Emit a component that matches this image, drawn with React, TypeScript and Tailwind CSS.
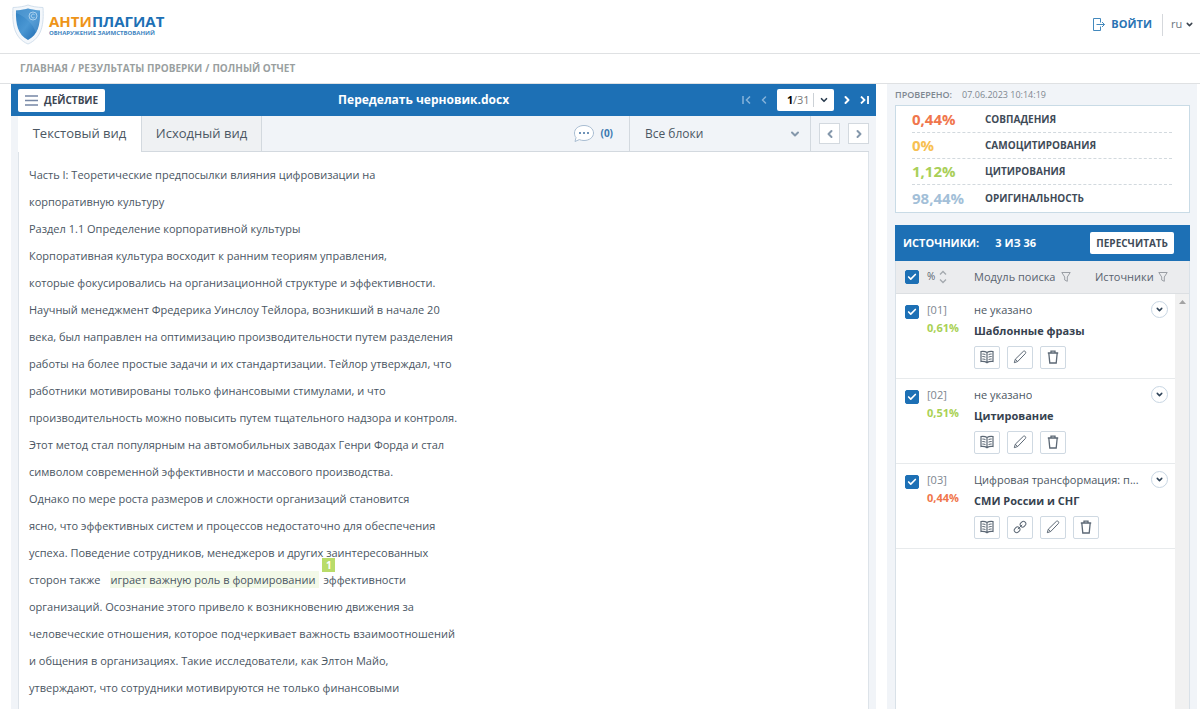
import type { ReactNode } from 'react'
import clsx from 'clsx'
import {
  Check,
  ChevronDown,
  ChevronLeft,
  ChevronRight,
} from 'lucide-react'

const documentLines = [
  'Часть I: Теоретические предпосылки влияния цифровизации на',
  'корпоративную культуру',
  'Раздел 1.1 Определение корпоративной культуры',
  'Корпоративная культура восходит к ранним теориям управления,',
  'которые фокусировались на организационной структуре и эффективности.',
  'Научный менеджмент Фредерика Уинслоу Тейлора, возникший в начале 20',
  'века, был направлен на оптимизацию производительности путем разделения',
  'работы на более простые задачи и их стандартизации. Тейлор утверждал, что',
  'работники мотивированы только финансовыми стимулами, и что',
  'производительность можно повысить путем тщательного надзора и контроля.',
  'Этот метод стал популярным на автомобильных заводах Генри Форда и стал',
  'символом современной эффективности и массового производства.',
  'Однако по мере роста размеров и сложности организаций становится',
  'ясно, что эффективных систем и процессов недостаточно для обеспечения',
  'успеха. Поведение сотрудников, менеджеров и других заинтересованных',
]

const documentLinesAfter = [
  'организаций. Осознание этого привело к возникновению движения за',
  'человеческие отношения, которое подчеркивает важность взаимоотношений',
  'и общения в организациях. Такие исследователи, как Элтон Майо,',
  'утверждают, что сотрудники мотивируются не только финансовыми',
]

const stats = [
  { value: '0,44%', label: 'СОВПАДЕНИЯ', color: 'text-[#f0764c]' },
  { value: '0%', label: 'САМОЦИТИРОВАНИЯ', color: 'text-[#f7c052]' },
  { value: '1,12%', label: 'ЦИТИРОВАНИЯ', color: 'text-[#a9cf58]' },
  { value: '98,44%', label: 'ОРИГИНАЛЬНОСТЬ', color: 'text-[#a3bfd8]' },
]

const sources = [
  {
    id: '01',
    percent: '0,61%',
    color: 'text-[#a9d155]',
    name: 'не указано',
    module: 'Шаблонные фразы',
    hasLink: false,
  },
  {
    id: '02',
    percent: '0,51%',
    color: 'text-[#a9d155]',
    name: 'не указано',
    module: 'Цитирование',
    hasLink: false,
  },
  {
    id: '03',
    percent: '0,44%',
    color: 'text-[#f0764c]',
    name: 'Цифровая трансформация: п...',
    module: 'СМИ России и СНГ',
    hasLink: true,
  },
]

function ShieldLogo() {
  return (
    <svg viewBox="0 0 34 41" className="w-[34px] h-[41px]" aria-hidden="true">
      <defs>
        <linearGradient id="shield" x1="0" y1="0" x2="1" y2="1">
          <stop offset="0" stopColor="#2f7fc0" />
          <stop offset="0.5" stopColor="#4a97d3" />
          <stop offset="1" stopColor="#1b66ad" />
        </linearGradient>
      </defs>
      <path
        d="M17 1c4 1.500 9 2.300 15 2.500C33 20 31 34 17 40 3 34 1 20 2 3.500 8 3.300 13 2.500 17 1z"
        fill="#f3f7fb"
        stroke="#d3e0ed"
      />
      <path
        d="M17 4.500c4 1.200 8 1.800 12 2C29.500 20 27 31 17 36 7 31 4.500 20 5 6.500c4-.2 8-.8 12-2z"
        fill="url(#shield)"
      />
      <path d="M5 9c8 3 17 10 20 20 3-6 4-13 4-22.500-4-.2-8-.8-12-2-4 1.200-8 1.800-12 2z" fill="#6fb0e0" opacity=".35" />
      <circle cx="22" cy="12" r="4" fill="none" stroke="#a9d0ee" strokeWidth="1" />
      <path d="M23.500 10.500a2 2 0 1 0 0 3" fill="none" stroke="#a9d0ee" strokeWidth="1" />
    </svg>
  )
}

function LoginIcon() {
  return (
    <svg viewBox="0 0 13 14" className="w-[13px] h-[14px]" fill="none" stroke="#4389bd" aria-hidden="true">
      <path d="M8.500 4.500v-4h-7v12h7v-4M4.500 6.500h8M10 4l2.500 2.500L10 9" />
    </svg>
  )
}

function FirstIcon() {
  return (
    <svg viewBox="0 0 9 8" className="w-[9px] h-2" fill="none" stroke="currentColor" aria-hidden="true">
      <path d="M1 0v8M8 .5L4.500 4 8 7.500" strokeWidth="1.500" />
    </svg>
  )
}

function LastIcon() {
  return (
    <svg viewBox="0 0 9 8" className="w-[9px] h-2" fill="none" stroke="currentColor" aria-hidden="true">
      <path d="M8 0v8M1 .5L4.500 4 1 7.500" strokeWidth="1.800" />
    </svg>
  )
}

function CommentIcon() {
  return (
    <svg viewBox="0 0 22 19" className="w-[22px] h-[19px]" aria-hidden="true">
      <path
        d="M11 1.500c5.500 0 9.500 3.300 9.500 7.500s-4 7.500-9.500 7.500c-1.800 0-3.300-.3-4.700-.9L2 17.500l1-4C1.800 12.300 1.500 10.700 1.500 9c0-4.200 4-7.500 9.500-7.500z"
        fill="#fff"
        stroke="#a9bdd2"
      />
      <path d="M6 9h2M10 9h2M14 9h2" stroke="#6f93b8" strokeWidth="2" />
    </svg>
  )
}

function SortIcon() {
  return (
    <svg viewBox="0 0 8 14" className="w-2 h-[14px]" fill="none" stroke="#a3a8ae" strokeWidth="1.300" aria-hidden="true">
      <path d="M1 4.500l3-3 3 3M1 9.500l3 3 3-3" />
    </svg>
  )
}

function FunnelIcon() {
  return (
    <svg viewBox="0 0 10 10" className="w-[10px] h-[10px] shrink-0" fill="none" stroke="#9a9ea4" aria-hidden="true">
      <path d="M.8.500h8.400L6.300 5v4.300l-2.600-1.300V5z" />
    </svg>
  )
}

function BookIcon() {
  return (
    <svg viewBox="0 0 14 14" className="w-[14px] h-[14px]" fill="none" stroke="#5c6875" aria-hidden="true">
      <path d="M7 2.500C5.500 1.500 3.500 1.200 1 1.500v10c2.500-.3 4.500.1 6 1.200 1.500-1.100 3.500-1.500 6-1.200v-10C10.500 1.200 8.500 1.500 7 2.500zM7 2.500v10" strokeWidth="1.200" />
      <path d="M2.300 4c1.100 0 2.200.1 3.200.6M2.300 6.500c1.100 0 2.200.1 3.200.6M2.300 9c1.100 0 2.200.1 3.200.6M11.700 4c-1.100 0-2.200.1-3.200.6M11.700 6.500c-1.100 0-2.200.1-3.200.6M11.700 9c-1.100 0-2.200.1-3.200.6" />
    </svg>
  )
}

function PencilIcon() {
  return (
    <svg viewBox="0 0 14 14" className="w-[14px] h-[14px]" fill="none" stroke="#5c6875" strokeLinejoin="round" aria-hidden="true">
      <path d="M1.300 12.700l1-3.500 7.900-7.700c.6-.6 1.500-.6 2.100 0s.6 1.500 0 2.100l-7.600 7.900zM2.300 9.200l2.300 2.300" />
    </svg>
  )
}

function TrashIcon() {
  return (
    <svg viewBox="0 0 12 14" className="w-3 h-[14px]" fill="none" stroke="#5c6875" aria-hidden="true">
      <path d="M.8 3h10.400M4 3V1.200h4V3M1.800 3l1 10h6.400l1-10" strokeWidth="1.300" />
    </svg>
  )
}

function ChainIcon() {
  return (
    <svg viewBox="0 0 14 14" className="w-[14px] h-[14px]" fill="none" stroke="#5c6875" aria-hidden="true">
      <rect x="7" y="1.800" width="6" height="4.800" rx="2.400" transform="rotate(-45 10 4.200)" />
      <rect x="1.100" y="7.400" width="6" height="4.800" rx="2.400" transform="rotate(-45 4.100 9.800)" />
      <path d="M4.800 9.200l4.400-4.400" />
    </svg>
  )
}

function Checkbox({ label }: { label: string }) {
  return (
    <label className="grid size-[14px] place-items-center">
      <input
        type="checkbox"
        defaultChecked
        aria-label={label}
        className="peer col-start-1 row-start-1 size-[14px] appearance-none rounded-xs border border-[#1d70b5] bg-white checked:bg-[#1d70b5]"
      />
      <Check
        className="pointer-events-none col-start-1 row-start-1 hidden size-[10px] text-white peer-checked:block"
        strokeWidth={4}
      />
    </label>
  )
}

function IconButton({ label, children }: { label: string; children: ReactNode }) {
  return (
    <button
      type="button"
      aria-label={label}
      className="flex h-[23px] w-[26px] items-center justify-center rounded-xs border border-[#cfd9e2] bg-white"
    >
      {children}
    </button>
  )
}

function Header() {
  return (
    <header className="flex h-[54px] items-center justify-between border-b border-[#dfe1e3] pl-[11px] pr-[6px]">
      <a href="#" className="flex items-center gap-1 pb-1">
        <ShieldLogo />
        <span className="flex flex-col">
          <span className="text-[15px] leading-4 font-bold text-[#1d70b5]">
            <span className="text-[#ee9418]">АНТИ</span>ПЛАГИАТ
          </span>
          <span className="text-[6px] leading-2 font-bold text-[#3d84bf]">
            ОБНАРУЖЕНИЕ ЗАИМСТВОВАНИЙ
          </span>
        </span>
      </a>
      <div className="flex items-center pb-1">
        <a href="#" className="flex items-center gap-[6px] text-[11px] font-bold text-[#2a74b4]">
          <LoginIcon />
          ВОЙТИ
        </a>
        <div className="ml-[10px] h-[22px] border-l border-[#d5d8dc]" />
        <label className="ml-2 grid w-[23px] items-center">
          <select
            aria-label="Язык"
            defaultValue="ru"
            className="col-start-1 row-start-1 appearance-none bg-transparent text-[11px] text-[#6b747e]"
          >
            <option>ru</option>
            <option>en</option>
          </select>
          <ChevronDown className="pointer-events-none col-start-1 row-start-1 size-[9px] justify-self-end text-[#3b444e]" strokeWidth={4} />
        </label>
      </div>
    </header>
  )
}

function Toolbar() {
  return (
    <div className="flex h-8 items-center justify-between bg-[#1d70b5] px-[7px]">
      <button
        type="button"
        className="flex h-[23px] items-center gap-[6px] rounded-xs bg-white px-[7px] text-[10px] font-bold text-[#3d4653]"
      >
        <svg viewBox="0 0 13 11" className="h-[11px] w-[13px]" stroke="#7687a5" strokeWidth="1.500" aria-hidden="true">
          <path d="M0 1h13M0 5.500h13M0 10h13" />
        </svg>
        ДЕЙСТВИЕ
      </button>
      <h1 className="text-[12px] font-bold text-white">Переделать черновик.docx</h1>
      <div className="flex items-center gap-[7px] text-white">
        <button type="button" aria-label="Первая страница" className="text-[#86b3da]">
          <FirstIcon />
        </button>
        <button type="button" aria-label="Предыдущая страница" className="text-[#86b3da]">
          <ChevronLeft className="size-3" strokeWidth={3} />
        </button>
        <label className="grid h-[22px] w-[57px] items-center rounded-xs bg-white text-[11px]">
          <select
            aria-label="Страница"
            defaultValue="1"
            className="col-start-1 row-start-1 h-full w-full appearance-none pl-[10px] font-bold text-black"
          >
            <option>1</option>
            <option>2</option>
            <option>3</option>
          </select>
          <span className="pointer-events-none col-start-1 row-start-1 flex items-center justify-between pl-4 pr-[5px] text-[#777]">
            /31
            <span className="flex items-center gap-[5px]">
              <span className="h-[14px] border-l border-[#ccd1d6]" />
              <ChevronDown className="size-[10px] text-[#2c3e50]" strokeWidth={4} />
            </span>
          </span>
        </label>
        <button type="button" aria-label="Следующая страница">
          <ChevronRight className="size-3" strokeWidth={4} />
        </button>
        <button type="button" aria-label="Последняя страница">
          <LastIcon />
        </button>
      </div>
    </div>
  )
}

function ViewTabs() {
  return (
    <div className="flex h-9 items-stretch text-[#4c5763]">
      <button type="button" className="w-[123px] bg-white text-[13px]">
        Текстовый вид
      </button>
      <button
        type="button"
        className="w-[121px] border border-t-0 border-[#d3d9df] bg-[#eff1f3] text-[13px]"
      >
        Исходный вид
      </button>
      <div className="flex flex-1 border-b border-[#d3d9df]">
        <button type="button" className="ml-auto flex items-center gap-[6px] pr-4 text-[10px] font-bold text-[#3b79b0]">
          <CommentIcon />
          (0)
        </button>
        <label className="grid w-[182px] items-center border-x border-[#d3d9df]">
          <select
            aria-label="Блоки"
            className="col-start-1 row-start-1 h-full w-full appearance-none pl-[15px] text-[12px]"
          >
            <option>Все блоки</option>
          </select>
          <ChevronDown className="pointer-events-none col-start-1 row-start-1 mr-[9px] size-3 justify-self-end text-[#8497ab]" strokeWidth={4} />
        </label>
        <div className="flex items-center gap-2 pl-2">
          <button
            type="button"
            aria-label="Предыдущий блок"
            className="flex size-[21px] items-center justify-center border border-[#d3d9df] bg-white text-[#8497ab]"
          >
            <ChevronLeft className="size-3" strokeWidth={4} />
          </button>
          <button
            type="button"
            aria-label="Следующий блок"
            className="flex size-[21px] items-center justify-center border border-[#d3d9df] bg-white text-[#8497ab]"
          >
            <ChevronRight className="size-3" strokeWidth={4} />
          </button>
        </div>
      </div>
    </div>
  )
}

function DocumentView() {
  return (
    <section className="flex min-w-0 flex-1 flex-col">
      <Toolbar />
      <div className="flex flex-1 flex-col bg-[#f1f4f8] px-[7px]">
        <ViewTabs />
        <article className="flex-1 border-x border-[#dde3e9] bg-white px-[10px] pt-[9px] pb-2 text-[11px] leading-[27px] text-[#4a5663]">
          {documentLines.map((line) => (
            <p key={line}>{line}</p>
          ))}
          <p>
            сторон также
            <mark className="relative ml-[10px] bg-[#f3f9e8] py-px pr-1 text-inherit">
              играет важную роль в формировании
              <span className="absolute -top-[13px] -right-4 flex h-[14px] w-[13px] items-center justify-center bg-[#b9dc69] text-[10px] leading-3 font-bold text-white">
                1
              </span>
            </mark>
            <span className="ml-1">эффективности</span>
          </p>
          {documentLinesAfter.map((line) => (
            <p key={line}>{line}</p>
          ))}
        </article>
      </div>
    </section>
  )
}

function StatsCard() {
  return (
    <dl className="border border-[#c9dbe6] bg-white py-px pl-4 pr-[17px]">
      {stats.map((stat, i) => (
        <div
          key={stat.label}
          className={clsx(
            'flex h-[26px] items-center border-dashed border-[#d2d9de]',
            i < stats.length - 1 && 'border-b'
          )}
        >
          <dt className="order-2 text-[10px] font-bold text-[#3f4b58]">{stat.label}</dt>
          <dd className={clsx('w-[73px] text-[15px] font-bold', stat.color)}>
            {stat.value}
          </dd>
        </div>
      ))}
    </dl>
  )
}

function SourcesTable() {
  return (
    <table className="w-full table-fixed border-collapse text-left text-[#4c5763]">
      <thead>
        <tr className="h-8 border-b border-[#dcdfe2] bg-[#ebecee] text-[11px] text-[#59636e]">
          <th className="w-[31px] pl-[9px]">
            <Checkbox label="Выбрать все" />
          </th>
          <th className="w-[47px] font-normal">
            <span className="flex items-center gap-1 text-[10px]">
              %
              <SortIcon />
            </span>
          </th>
          <th className="font-normal">
            <span className="flex items-center gap-[6px] whitespace-nowrap">
              Модуль поиска
              <FunnelIcon />
            </span>
          </th>
          <th className="w-20 font-normal">
            <span className="flex items-center gap-1">
              Источники
              <FunnelIcon />
            </span>
          </th>
        </tr>
      </thead>
      <tbody>
        {sources.map((source) => (
          <tr key={source.id} className="h-[85px] border-b border-[#e7eaec] align-top">
            <td className="pt-[11px] pl-[9px]">
              <Checkbox label={`Источник ${source.id}`} />
            </td>
            <td className="pt-[7px] text-[11px] leading-[18px]">
              <div className="text-[#7d868f]">[{source.id}]</div>
              <div className={clsx('font-bold', source.color)}>{source.percent}</div>
            </td>
            <td colSpan={2} className="pt-[7px] pr-[7px]">
              <div className="flex items-center justify-between">
                <span className="truncate text-[11px] leading-[18px]">{source.name}</span>
                <button
                  type="button"
                  aria-label="Подробнее"
                  className="flex size-[17px] shrink-0 items-center justify-center rounded-full border border-[#c8d6e3] text-[#2f4358]"
                >
                  <ChevronDown className="size-[9px]" strokeWidth={4} />
                </button>
              </div>
              <div className="mt-[3px] text-[11px] leading-[18px] font-bold text-[#36424f]">
                {source.module}
              </div>
              <div className="mt-[6px] flex gap-[7px]">
                <IconButton label="Читать">
                  <BookIcon />
                </IconButton>
                {source.hasLink && (
                  <IconButton label="Ссылка">
                    <ChainIcon />
                  </IconButton>
                )}
                <IconButton label="Изменить">
                  <PencilIcon />
                </IconButton>
                <IconButton label="Удалить">
                  <TrashIcon />
                </IconButton>
              </div>
            </td>
          </tr>
        ))}
      </tbody>
    </table>
  )
}

function Sidebar() {
  return (
    <aside className="flex w-[310px] shrink-0 flex-col bg-[#f1f4f8] pl-2 pr-[7px]">
      <p className="flex h-[21px] items-center gap-[10px] text-[9px] text-[#7e8790]">
        <span className="font-semibold">ПРОВЕРЕНО:</span>
        <time>07.06.2023 10:14:19</time>
      </p>
      <StatsCard />
      <section className="mt-3 flex flex-1 flex-col">
        <div className="flex h-9 items-center bg-[#1d70b5] pr-4 pl-2 text-[11px] font-bold text-white">
          <h2>ИСТОЧНИКИ:</h2>
          <span className="ml-4">3 ИЗ 36</span>
          <button
            type="button"
            className="ml-auto h-[22px] rounded-xs bg-white px-[6px] text-[10px] font-bold text-[#3f4b58]"
          >
            ПЕРЕСЧИТАТЬ
          </button>
        </div>
        <div className="flex flex-1 border-x border-[#d9e1e8] bg-white">
          <div className="min-w-0 flex-1">
            <SourcesTable />
          </div>
          <div className="flex w-[14px] flex-col">
            <div className="h-[33px] border-b border-[#dcdfe2] bg-[#ebecee]" />
            <div className="flex flex-1 justify-center bg-[#f1f1f1] pt-[6px]">
              <svg viewBox="0 0 7 4" className="h-1 w-[7px]" fill="#a3a3a3" aria-hidden="true">
                <path d="M0 4l3.500-4L7 4z" />
              </svg>
            </div>
          </div>
        </div>
      </section>
    </aside>
  )
}

export default function App() {
  return (
    <div className="flex min-h-screen flex-col bg-white font-['Open_Sans',sans-serif]">
      <Header />
      <nav className="flex h-[30px] items-center gap-[3px] border-b border-[#dfe1e3] pl-5 text-[10px] font-bold text-[#9a9f9f]">
        <a href="#">ГЛАВНАЯ</a>
        <span>/</span>
        <a href="#">РЕЗУЛЬТАТЫ ПРОВЕРКИ</a>
        <span>/</span>
        <span>ПОЛНЫЙ ОТЧЕТ</span>
      </nav>
      <main className="flex flex-1 gap-[11px] pr-[3px] pl-[11px]">
        <DocumentView />
        <Sidebar />
      </main>
    </div>
  )
}
